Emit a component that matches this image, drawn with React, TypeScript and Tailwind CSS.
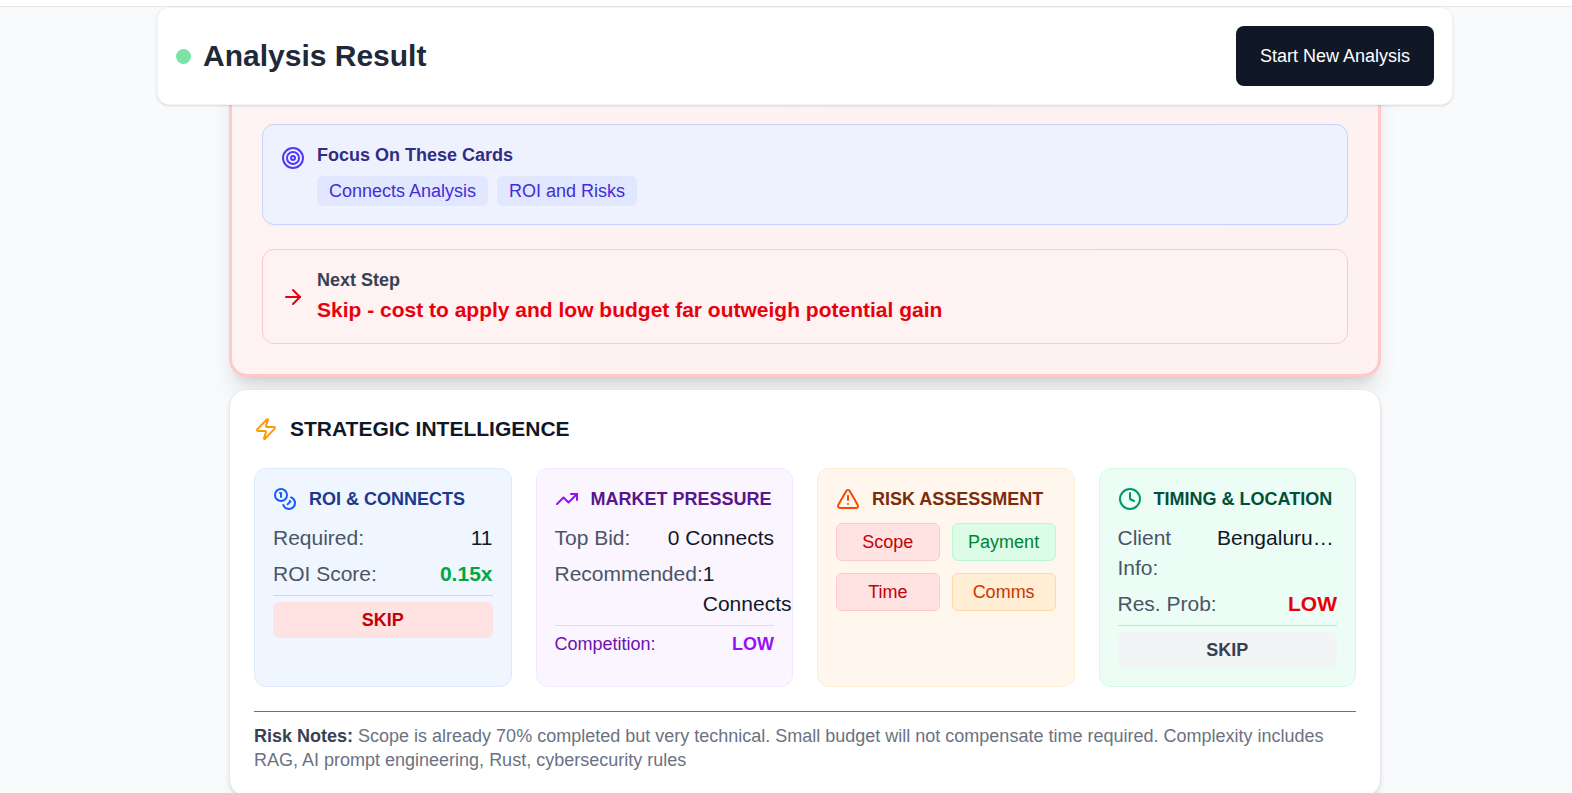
import clsx from "clsx";
import {
  ArrowRight,
  Clock,
  Coins,
  Target,
  TrendingUp,
  TriangleAlert,
  Zap,
} from "lucide-react";
import { ReactNode } from "react";

interface InsightCardProps {
  title: string;
  icon: ReactNode;
  className: string;
  titleClassName: string;
  children: ReactNode;
}

const InsightCard = ({
  title,
  icon,
  className,
  titleClassName,
  children,
}: InsightCardProps) => (
  <div className={clsx("min-w-0 rounded-xl border p-[18px]", className)}>
    <div className="mb-3 flex items-center gap-3">
      {icon}
      <h3
        className={clsx(
          "whitespace-nowrap text-[18px] leading-6 font-bold uppercase",
          titleClassName
        )}
      >
        {title}
      </h3>
    </div>
    {children}
  </div>
);

interface RowProps {
  label: string;
  value: string;
  valueClassName?: string;
}

const Row = ({ label, value, valueClassName }: RowProps) => (
  <div className="flex justify-between text-[21px] leading-[30px]">
    <span className="text-gray-600">{label}</span>
    <span className={valueClassName || "text-gray-900"}>{value}</span>
  </div>
);

const focusCards = ["Connects Analysis", "ROI and Risks"];

const risks = [
  { name: "Scope", className: "border-red-200 bg-red-100 text-red-700" },
  { name: "Payment", className: "border-green-200 bg-green-100 text-green-700" },
  { name: "Time", className: "border-red-200 bg-red-100 text-red-700" },
  {
    name: "Comms",
    className: "border-orange-200 bg-orange-100 text-orange-700",
  },
];

const Header = () => (
  <header className="relative z-10 flex items-center justify-between rounded-xl border border-gray-100 bg-white p-[18px] shadow-sm">
    <div className="flex items-center gap-3">
      <span className="size-[15px] rounded-full bg-[#7be3a3]" />
      <h1 className="text-[30px] leading-9 font-bold text-gray-800">
        Analysis Result
      </h1>
    </div>
    <button className="cursor-pointer rounded-lg bg-gray-900 px-6 py-[18px] text-[18px] leading-6 font-medium text-white">
      Start New Analysis
    </button>
  </header>
);

const Verdict = () => (
  <section className="-mt-12 rounded-[18px] border-3 border-red-200 bg-linear-to-r from-red-50 to-rose-50 px-[30px] pt-16 pb-[30px] shadow-xl">
    <div className="flex items-start gap-3 rounded-xl border border-indigo-200 bg-indigo-50 p-[18px]">
      <Target className="mt-[3px] size-6 shrink-0 text-indigo-600" />
      <div>
        <h3 className="text-[18px] leading-6 font-bold text-indigo-900">
          Focus On These Cards
        </h3>
        <div className="mt-[9px] flex flex-wrap gap-[9px]">
          {focusCards.map((card) => (
            <span
              key={card}
              className="rounded-md bg-indigo-100 px-3 py-[3px] text-[18px] leading-6 text-indigo-700"
            >
              {card}
            </span>
          ))}
        </div>
      </div>
    </div>
    <div className="mt-6 flex items-center gap-3 rounded-xl border border-red-200 bg-red-50 p-[18px]">
      <ArrowRight className="size-6 shrink-0 text-red-600" />
      <div>
        <h3 className="text-[18px] leading-6 font-bold text-gray-700">
          Next Step
        </h3>
        <p className="mt-[3px] text-[21px] leading-[30px] font-bold text-red-600">
          Skip - cost to apply and low budget far outweigh potential gain
        </p>
      </div>
    </div>
  </section>
);

const StrategicIntelligence = () => (
  <section className="mt-3 rounded-[18px] border border-gray-200 bg-white p-6 shadow-md">
    <div className="mb-6 flex items-center gap-3">
      <Zap className="size-6 text-amber-500" />
      <h2 className="text-[21px] leading-[30px] font-bold text-gray-900">
        STRATEGIC INTELLIGENCE
      </h2>
    </div>

    <div className="grid grid-cols-4 gap-6">
      <InsightCard
        title="ROI & Connects"
        icon={<Coins className="size-6 shrink-0 text-blue-600" />}
        className="border-blue-100 bg-blue-50"
        titleClassName="text-blue-900"
      >
        <div className="flex flex-col gap-[6px]">
          <Row label="Required:" value="11" />
          <Row
            label="ROI Score:"
            value="0.15x"
            valueClassName="font-bold text-green-600"
          />
          <div className="border-t border-blue-200 pt-[6px]">
            <div className="rounded-md bg-red-100 py-[6px] text-center text-[18px] leading-6 font-bold text-red-700">
              SKIP
            </div>
          </div>
        </div>
      </InsightCard>

      <InsightCard
        title="Market Pressure"
        icon={<TrendingUp className="size-6 shrink-0 text-purple-600" />}
        className="border-purple-100 bg-purple-50"
        titleClassName="text-purple-900"
      >
        <div className="flex flex-col gap-[6px]">
          <Row label="Top Bid:" value="0 Connects" />
          <Row label="Recommended:" value="1 Connects" />
          <div className="flex justify-between border-t border-purple-200 pt-[6px] text-[18px] leading-6">
            <span className="text-purple-800">Competition:</span>
            <span className="font-bold text-purple-600">LOW</span>
          </div>
        </div>
      </InsightCard>

      <InsightCard
        title="Risk Assessment"
        icon={<TriangleAlert className="size-6 shrink-0 text-orange-600" />}
        className="border-orange-100 bg-orange-50"
        titleClassName="text-orange-900"
      >
        <div className="grid grid-cols-2 gap-3">
          {risks.map((risk) => (
            <div
              key={risk.name}
              className={clsx(
                "rounded-md border py-[6px] text-center text-[18px] leading-6",
                risk.className
              )}
            >
              {risk.name}
            </div>
          ))}
        </div>
      </InsightCard>

      <InsightCard
        title="Timing & Location"
        icon={<Clock className="size-6 shrink-0 text-emerald-600" />}
        className="border-emerald-100 bg-emerald-50"
        titleClassName="text-emerald-900"
      >
        <div className="flex flex-col gap-[6px]">
          <Row
            label="Client Info:"
            value="Bengaluru, India"
            valueClassName="w-[120px] shrink-0 truncate text-gray-900"
          />
          <Row
            label="Res. Prob:"
            value="LOW"
            valueClassName="font-bold text-red-600"
          />
          <div className="border-t border-emerald-200 pt-[6px]">
            <div className="rounded-md bg-gray-100 py-[6px] text-center text-[18px] leading-6 font-bold text-gray-700">
              SKIP
            </div>
          </div>
        </div>
      </InsightCard>
    </div>

    <p className="mt-6 border-t border-gray-500 pt-3 text-[18px] leading-6 text-gray-500">
      <strong className="font-bold text-gray-700">Risk Notes:</strong> Scope is
      already 70% completed but very technical. Small budget will not compensate
      time required. Complexity includes RAG, AI prompt engineering, Rust,
      cybersecurity rules
    </p>
  </section>
);

const App = () => {
  return (
    <div className="min-h-screen bg-gray-50 font-['Liberation_Sans',Arial,sans-serif]">
      <div className="h-[7px] border-b border-gray-200 bg-white" />
      <main className="pl-[38px]">
        <div className="mx-auto max-w-[1296px]">
          <Header />
          <div className="mx-auto max-w-[1152px]">
            <Verdict />
            <StrategicIntelligence />
          </div>
        </div>
      </main>
    </div>
  );
};

export default App;
